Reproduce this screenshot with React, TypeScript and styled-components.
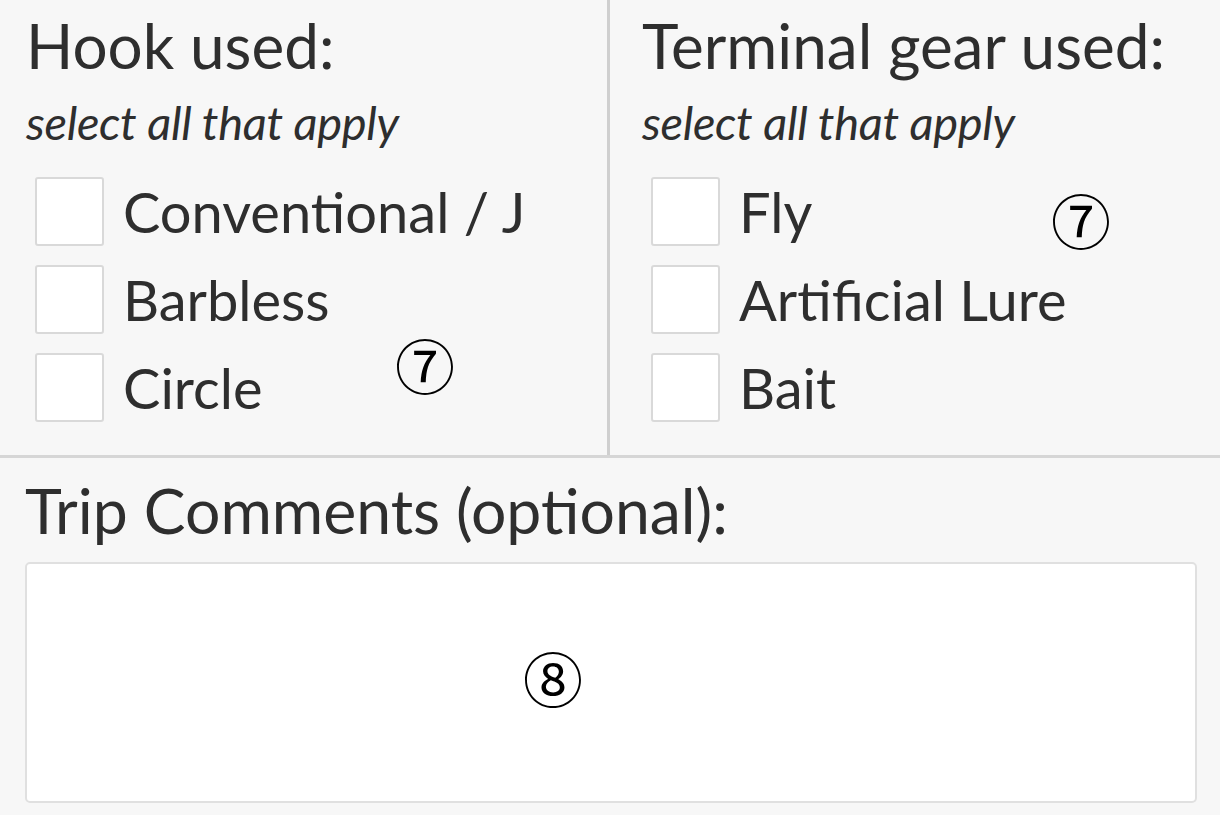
import * as React from 'react'
import styled, { createGlobalStyle } from 'styled-components'

const GlobalStyle = createGlobalStyle`
  html, body {
    margin: 0;
    padding: 0;
    background: #f7f7f7;
  }
  body {
    font-family: Lato, 'Noto Sans', sans-serif;
    color: #2e2e2e;
  }
`

const Page = styled.div`
  position: relative;
  width: 1220px;
  height: 815px;
  overflow: hidden;
  background: #f7f7f7;
`

const TopRow = styled.div`
  display: grid;
  grid-template-columns: 610px 1fr;
  height: 455px;
  border-bottom: 3px solid #d6d6d6;
`

const Column = styled.div<{ $divider?: boolean }>`
  position: relative;
  padding: 14px 0 0 ${p => (p.$divider ? 26 : 32)}px;
  border-right: ${p => (p.$divider ? '3px solid #cfcfcf' : 'none')};
`

const Title = styled.div<{ $size?: number }>`
  font-size: ${p => p.$size ?? 62}px;
  line-height: 62px;
`

const Hint = styled.div`
  font-size: 47px;
  line-height: 40px;
  font-style: italic;
  margin-top: 26px;
  letter-spacing: -0.3px;
`

const OptionList = styled.div`
  display: flex;
  flex-direction: column;
  gap: 19px;
  margin-top: 35px;
  padding-left: 9px;
`

const Option = styled.label`
  display: flex;
  align-items: center;
  gap: 19px;
  font-size: 56px;
  line-height: 69px;
`

const Box = styled.span`
  box-sizing: border-box;
  width: 69px;
  height: 69px;
  background: #fff;
  border: 2px solid #d9d9d9;
  border-radius: 3px;
  flex: none;
`

// circled numbers laid over the form as callouts
const Marker = styled.span<{ $x: number; $y: number }>`
  position: absolute;
  left: ${p => p.$x}px;
  top: ${p => p.$y}px;
  font-family: 'Noto Sans CJK JP', 'DejaVu Sans', sans-serif;
  font-size: 60px;
  line-height: 1;
  color: #000;
`

const Comments = styled.div`
  padding: 21px 23px 0 25px;
`

const CommentBox = styled.div`
  position: relative;
  box-sizing: border-box;
  height: 241px;
  margin-top: 21px;
  background: #fff;
  border: 2px solid #e0e0e0;
  border-radius: 5px;
`

const hooks = ['Conventional / J', 'Barbless', 'Circle']
const gear = ['Fly', 'Artificial Lure', 'Bait']

const App: React.FC = () => (
  <Page>
    <GlobalStyle />
    <TopRow>
      <Column $divider>
        <Title>Hook used:</Title>
        <Hint>select all that apply</Hint>
        <OptionList>
          {hooks.map(h => (
            <Option key={h}>
              <Box />
              {h}
            </Option>
          ))}
        </OptionList>
        <Marker $x={395} $y={334}>⑦</Marker>
      </Column>
      <Column>
        <Title>Terminal gear used:</Title>
        <Hint>select all that apply</Hint>
        <OptionList>
          {gear.map(g => (
            <Option key={g}>
              <Box />
              {g}
            </Option>
          ))}
        </OptionList>
        <Marker $x={441} $y={189}>⑦</Marker>
      </Column>
    </TopRow>
    <Comments>
      <Title $size={62.5}>Trip Comments (optional):</Title>
      <CommentBox>
        <Marker $x={496} $y={83}>⑧</Marker>
      </CommentBox>
    </Comments>
  </Page>
)

export default App
